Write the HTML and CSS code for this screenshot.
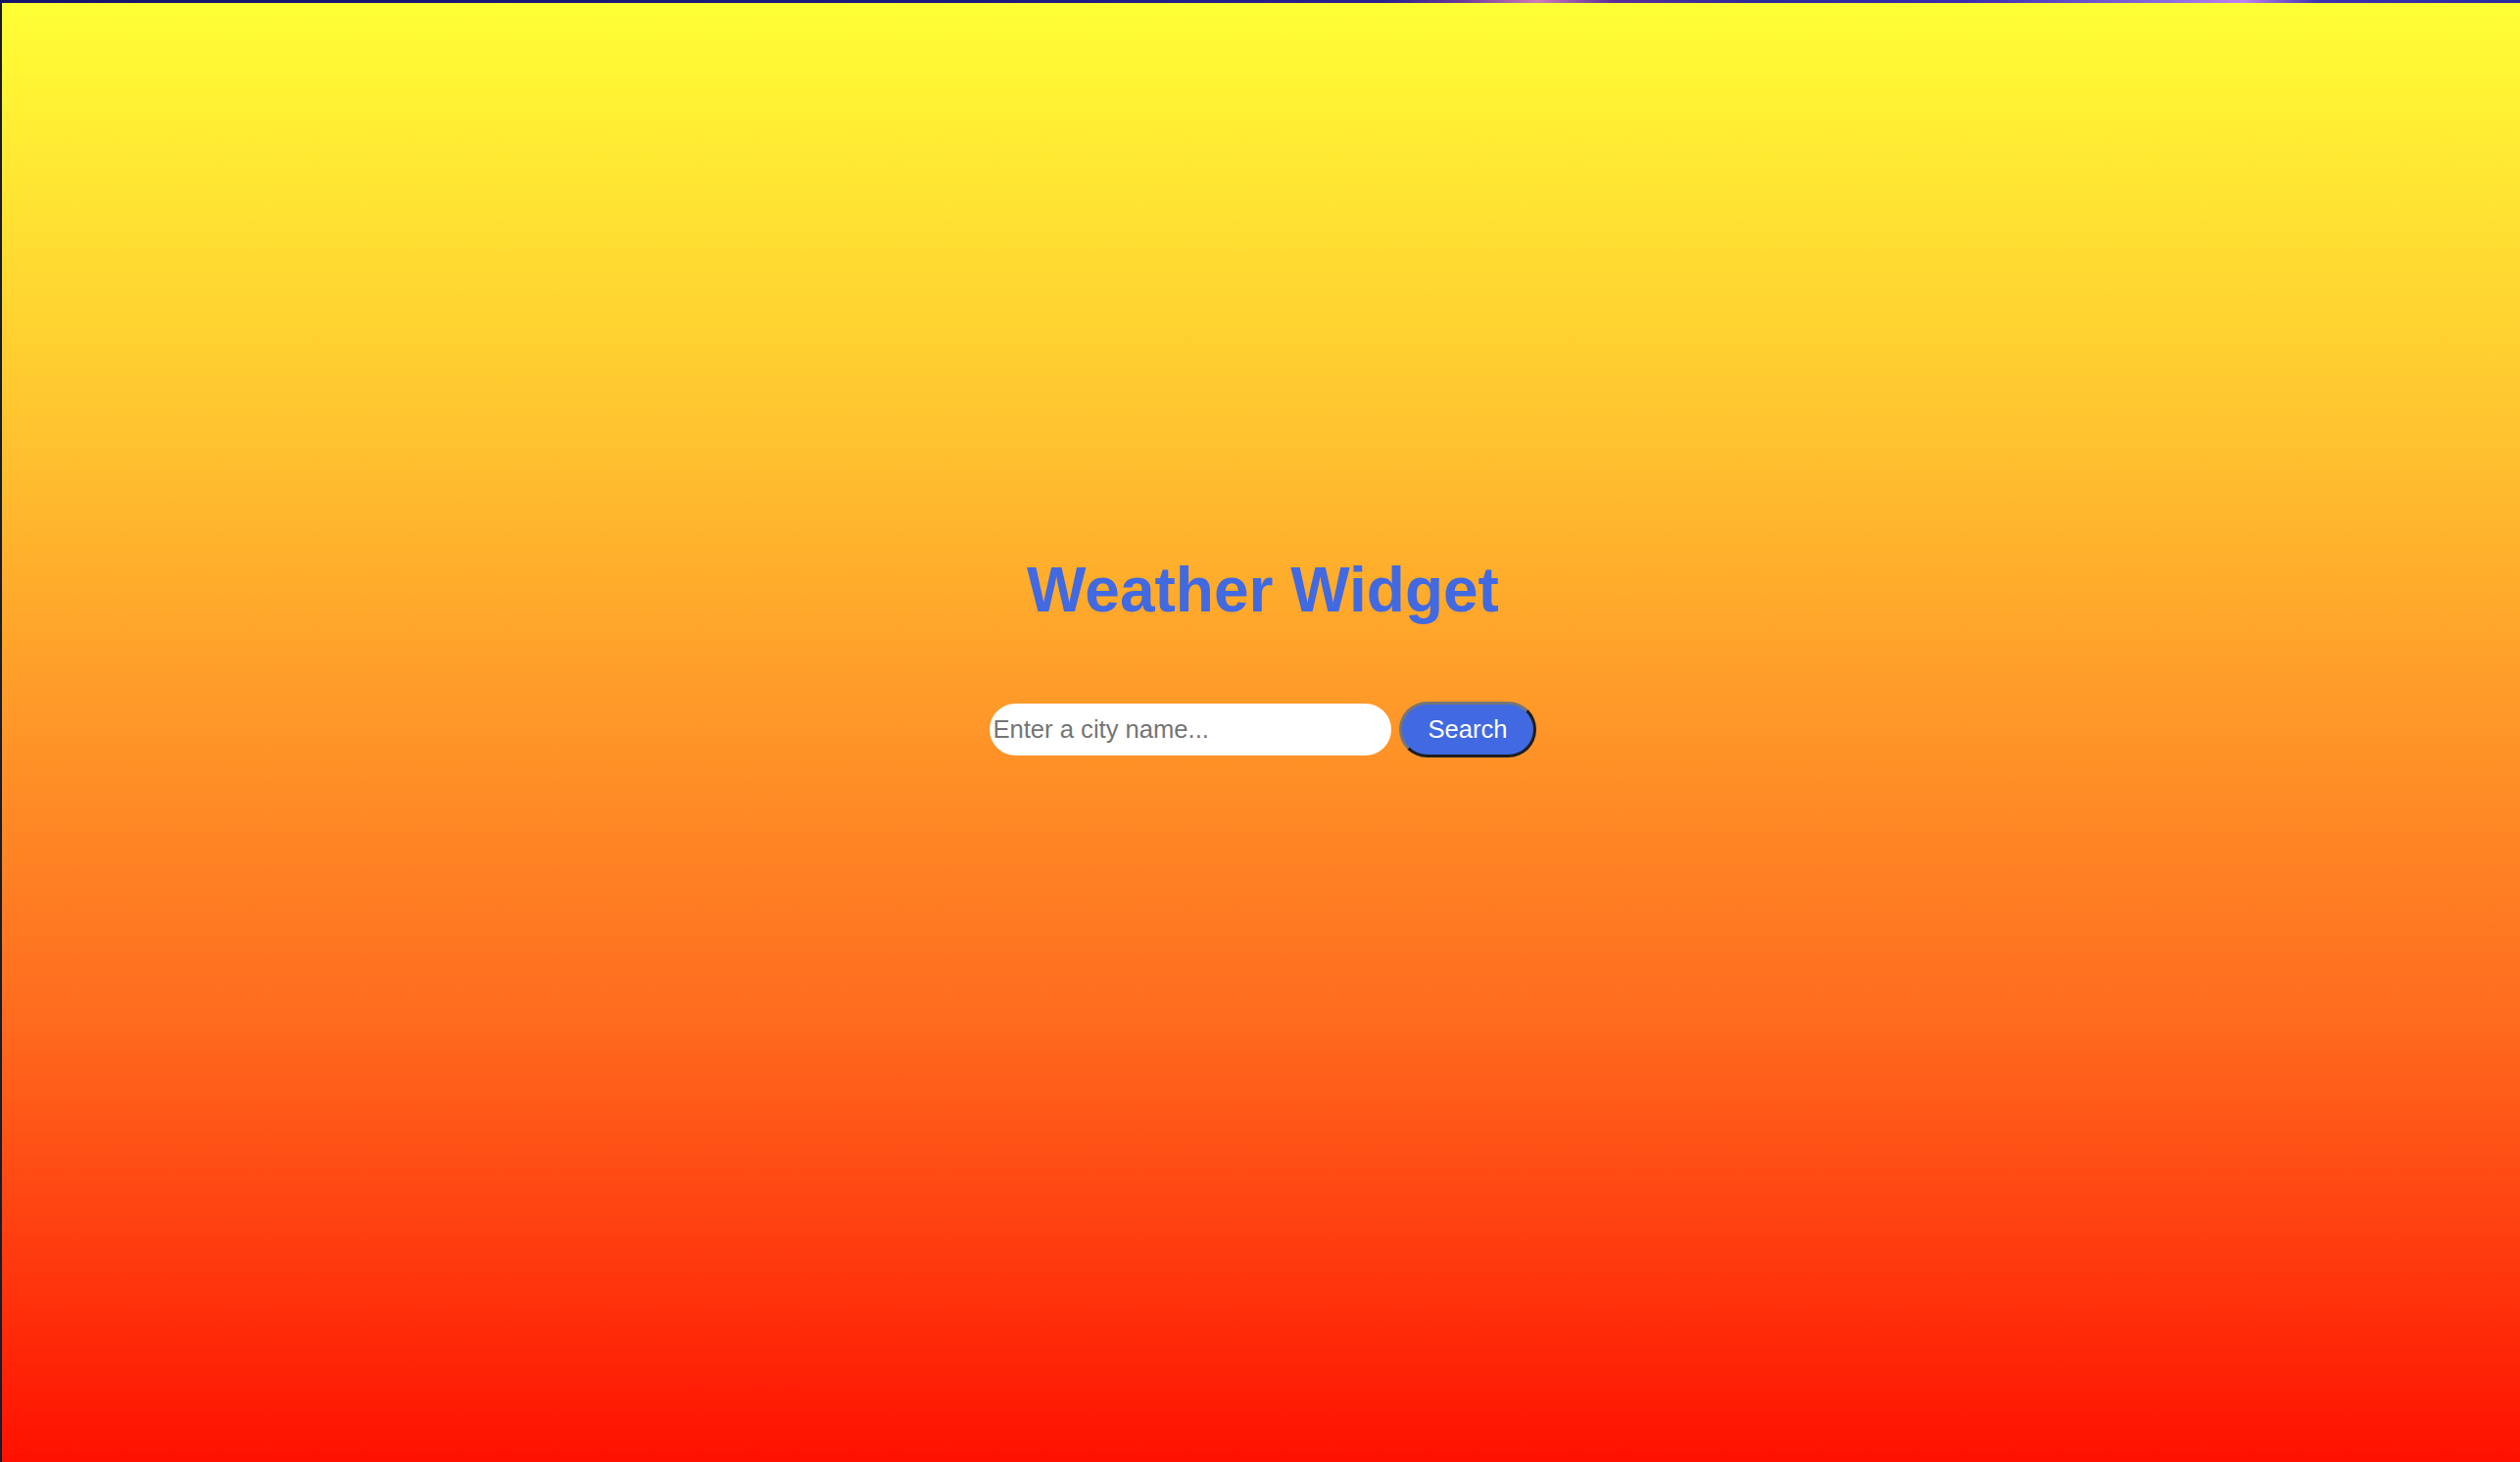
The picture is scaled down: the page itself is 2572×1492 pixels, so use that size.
FILE: index.html
```html
<!DOCTYPE html>
<html lang="en">
<head>
<meta charset="utf-8">
<title>Weather Widget</title>
<link rel="stylesheet" href="styles.css">
</head>
<body>
<div class="topbar"></div>
<main class="page">
  <h1 class="title">Weather Widget</h1>
  <form class="search" onsubmit="return false;">
    <input class="search-input" type="text" placeholder="Enter a city name...">
    <button class="search-btn" type="submit">Search</button>
  </form>
</main>
</body>
</html>
```

FILE: styles.css
```css
html, body {
  margin: 0;
  padding: 0;
  height: 100%;
}

body {
  display: flex;
  flex-direction: column;
  font-family: "Liberation Sans", Arial, sans-serif;
  background: #1b1b27;
}

.topbar {
  height: 3px;
  flex: none;
  background: linear-gradient(to right,
    #14146a 0%, #1c1c80 40%, #2a2090 55%, #6a3a9a 58%, #d07ab8 61%, #5a2e9a 64%,
    #2a2a9a 70%, #3a2ab0 78%, #8a6ae0 86%, #c080f0 89%, #3a30b0 92%, #2a2aa0 100%);
}

.page {
  flex: 1;
  box-sizing: border-box;
  margin-left: 2px;
  display: flex;
  flex-direction: column;
  align-items: center;
  justify-content: center;
  padding: 0 0 158px 4px;
  background: linear-gradient(to bottom, #ffff35 0%, #ffc22f 30%, #ff9528 50%, #ff6a1e 70%, #ff1000 100%);
}

.title {
  margin: 0 0 77px;
  font-size: 64px;
  font-weight: bold;
  color: #4169e1;
  line-height: normal;
}

.search {
  display: flex;
  align-items: center;
  gap: 8px;
}

.search-input {
  width: 404px;
  padding: 12px 3px;
  border: none;
  border-radius: 28px;
  font-family: "Liberation Sans", Arial, sans-serif;
  font-size: 25.6px;
  line-height: normal;
  color: #333;
  background: #fff;
  outline: none;
}

.search-input::placeholder {
  color: #757575;
}

.search-btn {
  padding: 11px 26px;
  border: 3px solid;
  border-color: #767676 #1e1e1e #1e1e1e #767676;
  border-radius: 30px;
  background: #4169e1;
  color: #fff;
  font-family: "Liberation Sans", Arial, sans-serif;
  font-size: 25.6px;
  line-height: normal;
  cursor: pointer;
}
```
